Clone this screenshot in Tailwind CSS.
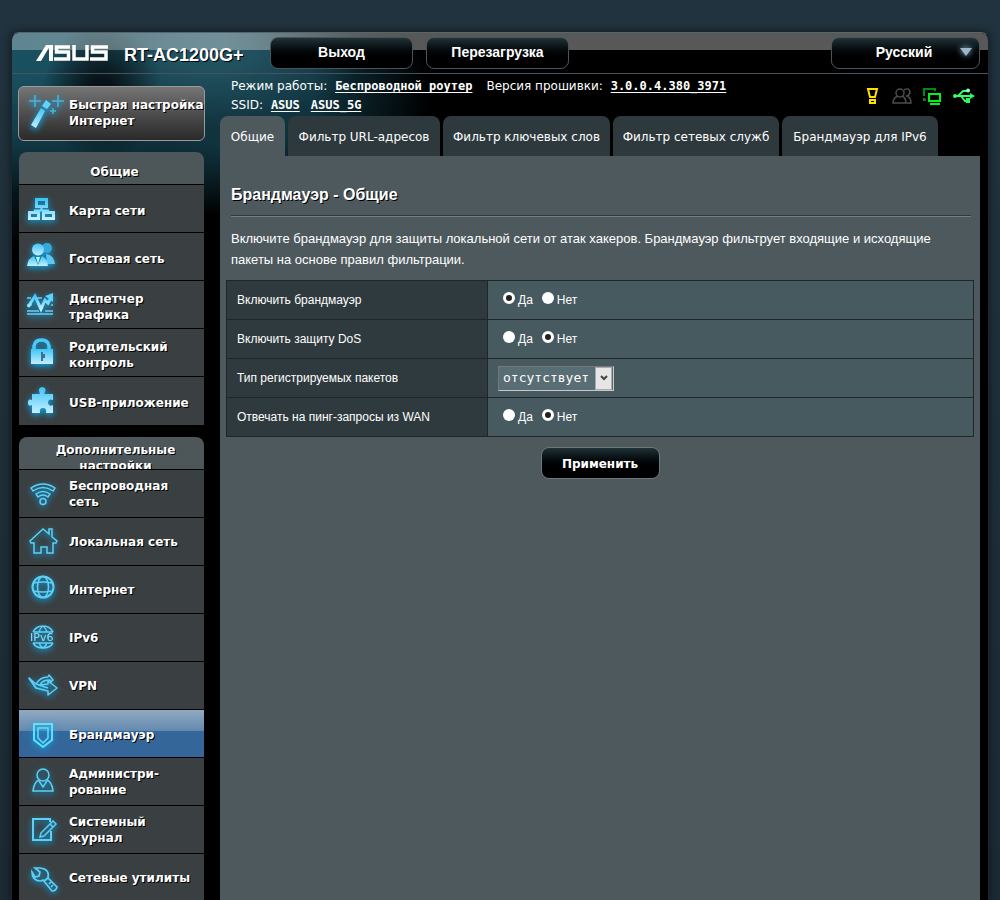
<!DOCTYPE html>
<html lang="ru">
<head>
<meta charset="utf-8">
<title>ASUS RT-AC1200G+ - Брандмауэр</title>
<script src="https://cdn.jsdelivr.net/npm/@tailwindcss/browser@4"></script>
</head>
<body class="min-h-screen bg-[#21333e] bg-linear-to-b from-[#21333e] to-[#1c2a34] px-[11px] pt-8 font-['DejaVu_Sans',sans-serif] text-white">
<svg class="absolute h-0 w-0" aria-hidden="true"><defs>
<linearGradient id="ice" x1="0" y1="0" x2="0" y2="1"><stop offset="0" stop-color="#3fc4f8"/><stop offset="1" stop-color="#c4efff"/></linearGradient>
</defs></svg>
<div class="relative min-h-[868px] overflow-hidden rounded-t-lg border-x border-t border-[#55666c] border-x-[#1c262b] bg-black shadow-[0_0_8px_#10181d]">
  <!-- backdrop glow -->
  <div class="absolute inset-x-0 top-0 h-60 bg-[radial-gradient(ellipse_60px_70px_at_90px_60px,#081318_20%,transparent_100%),radial-gradient(ellipse_150px_80px_at_200px_15px,#21505e_30%,transparent_100%),radial-gradient(ellipse_200px_150px_at_10px_10px,#195060_20%,transparent_100%),radial-gradient(ellipse_210px_130px_at_220px_60px,#10333e_40%,transparent_95%),radial-gradient(ellipse_240px_180px_at_40px_50px,#0c2a33_30%,transparent_95%)]"></div>
  <div class="absolute inset-x-0 top-0 h-[17px] bg-linear-to-r from-white/30 from-0% via-white/36 via-22% to-[#585858] to-50%"></div>

  <header class="relative flex h-[41px] items-center border-b border-[#46535d] pr-2">
    <svg class="ml-6 h-4 w-[72px]" viewBox="0 0 72 16" fill="none" stroke="#fff" stroke-width="3.500" role="img" aria-label="ASUS">
      <path d="M0 16 10 0h4.500L5 16zM12 0h5v16h-4V4z" fill="#fff" stroke="none"/>
      <path d="M34 2H20.500v5H32.500v7H18M38 0v14h13V0M72 2H56.500V7H70V14H54"/>
    </svg>
    <h1 class="ml-4 w-[146px] pt-[3px] text-lg/5 font-bold font-['Liberation_Sans',sans-serif] [text-shadow:1px_1px_0_#000]">RT-AC1200G+</h1>
    <button class="h-8 w-[143px] rounded-lg border border-[#48545a] bg-linear-to-b from-[#213238] to-black to-75% pb-0.5 text-sm font-bold font-['Liberation_Sans',sans-serif]">Выход</button>
    <button class="ml-[13px] h-8 w-[143px] rounded-lg border border-[#48545a] bg-linear-to-b from-[#213238] to-black to-75% pb-0.5 text-sm font-bold font-['Liberation_Sans',sans-serif]">Перезагрузка</button>
    <button class="ml-auto flex h-8 w-[149px] items-center rounded-lg border border-[#48545a] bg-linear-to-b from-[#213238] to-black to-75% pb-0.5 pr-[7px] text-sm font-bold font-['Liberation_Sans',sans-serif]"><span class="flex-1 pl-4">Русский</span>
      <svg class="h-2 w-3 drop-shadow-[0_0_3px_#9cf]" viewBox="0 0 12 8"><path d="M0 0h12L6 8z" fill="#9fb6c6"/></svg></button>
  </header>

  <div class="relative flex gap-[15px] pl-[6px] pr-2">
    <nav class="w-[187px] shrink-0 pt-3 text-[12px]/4 font-bold [text-shadow:1px_1px_0_#000]">
      <a href="#" class="flex h-[55px] items-center rounded-md border border-[#9a9a9a] bg-linear-to-b from-[#757575] to-[#2a2a2a] pb-0.5">
        <svg class="ml-[9px] mr-1 h-9 w-[37px] shrink-0 drop-shadow-[0_2px_3px_#08b4ff]" viewBox="0 0 37 36"><path d="M3 30 13 13l4 3L8 33z" fill="url(#ice)"/><path d="m14 11 4-6 5 4-4 5z" fill="#5fd4ff"/><path d="M7 0v12M1 6h12M30 0v12M24 6h12M25 13v6M22 16h6" stroke="#4ab4dc" stroke-width="1.500"/></svg>
        <span class="whitespace-nowrap">Быстрая настройка<br>Интернет</span></a>

      <section class="mx-px mt-[11px] divide-y divide-black">
        <h2 class="h-[33px] rounded-t-lg bg-[#4d5659] pl-[6px] pt-3 text-center">Общие</h2>
        <a href="#" class="flex h-12 items-center bg-[#3a3f41] pt-1"><svg class="mx-2 h-[34px] w-[34px] shrink-0 drop-shadow-[0_2px_3px_#08aaf0]" viewBox="0 0 34 34" fill="none" stroke="url(#ice)" stroke-width="3"><path d="M9.500 5.500h10v7h-10zM2.500 18.500h9v6h-9zM16.500 18.500h10v6h-10z"/><path d="M14.500 14v2M7 16.500h15" stroke="#7fdcff" stroke-width="2"/></svg><span class="flex-1">Карта сети</span></a>
        <a href="#" class="flex h-12 items-center bg-[#3a3f41] pt-1"><svg class="mx-2 h-[34px] w-[34px] shrink-0 drop-shadow-[0_2px_3px_#08aaf0]" viewBox="0 0 34 34"><circle cx="20" cy="6" r="5" fill="#36a8dc"/><path d="M19 12q8 1 9 10h-8z" fill="#5cc8f0"/><circle cx="11" cy="7.500" r="6" fill="url(#ice)"/><path d="M0 24q1-8 7-10l4 9 4-9q5 2 6 10z" fill="url(#ice)"/><path d="m9 15 2 7 2-7z" fill="#bff"/></svg><span class="flex-1">Гостевая сеть</span></a>
        <a href="#" class="flex h-12 items-center bg-[#3a3f41] pt-1"><svg class="mx-2 h-[34px] w-[34px] shrink-0 drop-shadow-[0_2px_3px_#08aaf0]" viewBox="0 0 34 34" fill="none" stroke="url(#ice)"><path d="M0 8h4M10 8h5M24 8h2M0 15h5M24 15h2M0 21h12M18 21h8M0 24h26" stroke="#6bcdf3" stroke-width="1.500"/><path d="m1 17 7-11 6 13 4-9 3 3 4-7" stroke-width="3"/><path d="m18 6 8-3v9z" fill="#5cd3ff" stroke="none"/></svg><span class="flex-1">Диспетчер<br>трафика</span></a>
        <a href="#" class="flex h-12 items-center bg-[#3a3f41] pt-1"><svg class="mx-2 h-[34px] w-[34px] shrink-0 drop-shadow-[0_2px_3px_#08aaf0]" viewBox="0 0 34 34"><path d="M7 12V8q1-6 7.500-6T22 8v4" fill="none" stroke="#4cc8fa" stroke-width="3.500"/><path d="M4 11h22v15H4z" fill="url(#ice)"/><path d="M14 14v9h2v-3h2v-4h-2v-2z" fill="#39748c"/></svg><span class="flex-1">Родительский<br>контроль</span></a>
        <a href="#" class="flex h-12 items-center bg-[#3a3f41] pt-1"><svg class="mx-2 h-[34px] w-[34px] shrink-0 drop-shadow-[0_2px_3px_#08aaf0]" viewBox="0 0 34 34"><path d="M5 8h8q-3-6 2-7 6 1 2 7h9v6q-5-2-5 3 1 4 5 2v8h-7q1-5-3-5t-3 5H5v-8q-4 2-4-2.500T5 14z" fill="url(#ice)"/></svg><span class="flex-1">USB-приложение</span></a>
      </section>

      <section class="mx-px mt-3 divide-y divide-black">
        <h2 class="h-[33px] overflow-hidden rounded-t-lg bg-[#4d5659] pl-6 pr-4 pt-[5px] text-center">Дополнительные настройки</h2>
        <a href="#" class="flex h-12 items-center bg-[#3a3f41]"><svg class="mx-2 h-[34px] w-[34px] shrink-0 drop-shadow-[0_2px_3px_#08aaf0]" viewBox="0 0 34 34" fill="none" stroke="#5fd0f5" stroke-width="1.500"><path d="M4 11q12-8 24 0l-2 3q-10-7-20 0zM9 17q7-5 14 0l-2 3q-5-4-10 0z"/><circle cx="16" cy="24.500" r="3"/></svg><span class="flex-1">Беспроводная<br>сеть</span></a>
        <a href="#" class="flex h-12 items-center bg-[#3a3f41]"><svg class="mx-2 h-[34px] w-[34px] shrink-0 drop-shadow-[0_2px_3px_#08aaf0]" viewBox="0 0 34 34" fill="none" stroke="#5fd0f5" stroke-width="1.500"><path d="m3 16 13-12 6 5V4h3v8l5 4-1 2h-3v10h-6v-6h-6v6H7V18H4z"/></svg><span class="flex-1">Локальная сеть</span></a>
        <a href="#" class="flex h-12 items-center bg-[#3a3f41]"><svg class="mx-2 h-[34px] w-[34px] shrink-0 drop-shadow-[0_2px_3px_#08aaf0]" viewBox="0 0 34 34" fill="none" stroke="#5fd0f5" stroke-width="1.500"><circle cx="16" cy="14" r="10.500" stroke-width="2"/><ellipse cx="16" cy="14" rx="5.500" ry="10.500"/><path d="M7 10q9-2 18 0M7 18q9 2 18 0"/></svg><span class="flex-1">Интернет</span></a>
        <a href="#" class="flex h-12 items-center bg-[#3a3f41]"><svg class="mx-2 h-[34px] w-[34px] shrink-0 drop-shadow-[0_2px_3px_#08aaf0]" viewBox="0 0 34 34" fill="none" stroke="#5fd0f5" stroke-width="1.500"><path d="M6 11q3-6 10-6t10 6M6 22q3 5 10 5t10-5M12 11q1-4 4-6 3 2 4 6M12 22q1 3 4 5 3-2 4-5M6 11h20M6 22h20"/><text x="3" y="20" fill="#8fe0ff" stroke="none" font-family="DejaVu Sans" font-size="11" font-weight="400" style="text-shadow:none">IPv6</text></svg><span class="flex-1">IPv6</span></a>
        <a href="#" class="flex h-12 items-center bg-[#3a3f41]"><svg class="mx-2 h-[34px] w-[34px] shrink-0 drop-shadow-[0_2px_3px_#08aaf0]" viewBox="0 0 34 34" fill="none" stroke="#5fd0f5" stroke-width="1.500" stroke-linejoin="round"><path d="m2 9 7 6q4-7 12-7l1-2 4 5-2 2-1-2q-8 0-10 5l8-1v-3l9 7-9 7v-4L9 19z"/><path d="m2 9 7 10M9 15l12 4"/></svg><span class="flex-1">VPN</span></a>
        <a href="#" aria-current="page" class="flex h-12 items-center bg-linear-to-b from-[#91aac2] from-0% via-[#6289ae] via-45% to-[#35669a] to-45% pt-0.5"><svg class="mx-2 h-[34px] w-[34px] shrink-0 drop-shadow-[0_2px_3px_#08aaf0]" viewBox="0 0 34 34" fill="none" stroke="#5fe0ff" stroke-width="1.500"><path d="M7 6h18v16l-9 7-9-7z" stroke-width="2"/><path d="M11 10h10v10l-5 5-5-5z"/></svg><span class="flex-1">Брандмауэр</span></a>
        <a href="#" class="flex h-12 items-center bg-[#3a3f41]"><svg class="mx-2 h-[34px] w-[34px] shrink-0 drop-shadow-[0_2px_3px_#08aaf0]" viewBox="0 0 34 34" fill="none" stroke="#5fd0f5" stroke-width="1.500"><circle cx="16" cy="10" r="6"/><path d="M12 15q-5 2-6 11h20q-1-9-6-11M12 16l4 6 4-6"/></svg><span class="flex-1">Администри-<br>рование</span></a>
        <a href="#" class="flex h-12 items-center bg-[#3a3f41]"><svg class="mx-2 h-[34px] w-[34px] shrink-0 drop-shadow-[0_2px_3px_#08aaf0]" viewBox="0 0 34 34" fill="none" stroke="#5fd0f5" stroke-width="1.500"><path d="M23 9V6H6v21h18v-9" stroke-width="2"/><path d="m14 20 12-12 3 3-12 12-4 1zM23 11l3 3"/></svg><span class="flex-1">Системный<br>журнал</span></a>
        <a href="#" class="flex h-12 items-center bg-[#3a3f41]"><svg class="mx-2 h-[34px] w-[34px] shrink-0 drop-shadow-[0_2px_3px_#08aaf0]" viewBox="0 0 34 34" fill="none" stroke="#5fd0f5" stroke-width="1.700"><path d="M5 11q0 9 9 9l2-1 9 11q4 0 5-4l-9-9q2-9-8-10H8l5 4-1 4-4 1z"/><path d="m17 20 4-3M22 23l2-2M24 26l2-2"/></svg><span class="flex-1">Сетевые утилиты</span></a>
      </section>
    </nav>

    <div class="flex min-w-0 flex-1 flex-col">
      <div class="flex h-[42px] pl-[11px] pt-[3px]">
        <div class="flex-1 text-[12px]/[19px]">
          <p>Режим работы: <a href="#" class="ml-1 font-bold underline underline-offset-2 font-['DejaVu_Sans_Mono',monospace]">Беспроводной роутер</a><span class="ml-[14px]">Версия прошивки:</span> <a href="#" class="ml-1 font-bold underline underline-offset-2 font-['DejaVu_Sans_Mono',monospace]">3.0.0.4.380_3971</a></p>
          <p>SSID: <a href="#" class="ml-1 font-bold underline underline-offset-2 font-['DejaVu_Sans_Mono',monospace]">ASUS</a><a href="#" class="ml-[11px] font-bold underline underline-offset-2 font-['DejaVu_Sans_Mono',monospace]">ASUS_5G</a></p>
        </div>
        <div class="mr-1 mt-[9px] flex h-5 items-center gap-[10px]">
          <svg class="h-5 w-5" viewBox="0 0 20 20" fill="none" stroke="#ffe000" stroke-width="2"><path d="M6 3h9l-2 8H8zM8 14h5v3H8z"/></svg>
          <svg class="h-5 w-5" viewBox="0 0 20 20" fill="none" stroke="#4d4d4d" stroke-width="1.500"><circle cx="8" cy="7" r="4"/><path d="M12 4q5-3 6 2 0 3-3 4 4 2 4 7h-5M6 10q-5 2-5 7h13q0-5-4-7"/></svg>
          <svg class="h-5 w-5" viewBox="0 0 20 20" fill="none" stroke="#00f020" stroke-width="2"><path d="M2 10V3h11v2M2 12v2h2" stroke="#008a10"/><path d="M7 8h11v7H7zM8 18h10"/></svg>
          <svg class="h-5 w-6" viewBox="0 0 24 20" fill="none" stroke="#3f6" stroke-width="1.800"><path d="M2 10h18M6 10l5-5h4M9 10l4 5h3"/><circle cx="3" cy="10" r="2" fill="#3f6" stroke="none"/><circle cx="16" cy="4.500" r="2" fill="#8fc" stroke="none"/><path d="m18 7 5 3-5 3zM14 12h4v5h-4z" fill="#2f5" stroke="none"/></svg>
        </div>
      </div>
      <div class="flex h-[40px] gap-[3px] text-[12px] [&>a]:flex [&>a]:items-center [&>a]:justify-center [&>a]:rounded-t-lg [&>a]:whitespace-nowrap [&>a]:pt-px">
        <a href="#" aria-current="page" class="w-[65px] bg-[#4d595d]">Общие</a>
        <a href="#" class="w-[152px] bg-[#2e393e]">Фильтр URL-адресов</a>
        <a href="#" class="w-[167px] bg-[#2e393e]">Фильтр ключевых слов</a>
        <a href="#" class="w-[166px] bg-[#2e393e]">Фильтр сетевых служб</a>
        <a href="#" class="w-[156px] bg-[#2e393e]">Брандмауэр для IPv6</a>
      </div>
      <main class="flex-1 bg-[#4d595d] px-[6px] pt-[29px] font-['Liberation_Sans',sans-serif] text-xs">
        <h2 class="ml-[5px] mr-[3px] h-[31px] border-b border-[#2e3a3e] text-base/5 font-bold shadow-[0_1px_0_#6d7f87] [text-shadow:1px_1px_0_#000]">Брандмауэр - Общие</h2>
        <p class="mb-[10px] ml-[5px] mr-[3px] mt-3 text-[13px]/[21px]">Включите брандмауэр для защиты локальной сети от атак хакеров. Брандмауэр фильтрует входящие и исходящие пакеты на основе правил фильтрации.</p>
        <form>
          <table class="w-full border-collapse [&_td]:h-[39px] [&_td]:border [&_td]:border-[#202528] [&_td]:bg-[#475a5f] [&_td]:pl-[15px] [&_th]:w-[261px] [&_th]:border [&_th]:border-[#202528] [&_th]:bg-[#2f3a3e] [&_th]:pl-[10px] [&_th]:text-left [&_th]:font-normal [&_input]:mr-[3px] [&_input]:h-3 [&_input]:w-3 [&_input]:appearance-none [&_input]:rounded-full [&_input]:bg-white [&_input:checked]:border-[3px] [&_input:checked]:border-white [&_input:checked]:bg-[#222] [&_label]:mr-[9px]">
            <tr><th scope="row">Включить брандмауэр</th><td><label><input type="radio" name="fw" checked>Да</label><label><input type="radio" name="fw">Нет</label></td></tr>
            <tr><th scope="row">Включить защиту DoS</th><td><label><input type="radio" name="dos">Да</label><label><input type="radio" name="dos" checked>Нет</label></td></tr>
            <tr><th scope="row"><label for="log">Тип регистрируемых пакетов</label></th><td><div class="relative -ml-[5px] w-[116px]"><select id="log" class="block h-[25px] w-full appearance-none border border-[#c8c8c8] border-l-[#777] border-t-[#777] bg-[#596e74] pl-1 text-[13px] font-['DejaVu_Sans_Mono',monospace]"><option>отсутствует</option></select>
              <span class="pointer-events-none absolute bottom-px right-0.5 top-px flex w-[17px] items-center justify-center border border-[#aaa] bg-[#e6e6e6]"><svg class="h-[6px] w-[8px]" viewBox="0 0 8 6" fill="none" stroke="#444" stroke-width="2"><path d="m1 1 3 3 3-3"/></svg></span></div></td></tr>
            <tr><th scope="row">Отвечать на пинг-запросы из WAN</th><td><label><input type="radio" name="ping">Да</label><label><input type="radio" name="ping" checked>Нет</label></td></tr>
          </table>
          <button type="button" class="mx-auto mt-[10px] block h-8 w-[119px] rounded-lg border border-[#6b777b] bg-linear-to-b from-[#213238] to-black to-75% pt-0.5 text-[12px] font-bold font-['DejaVu_Sans',sans-serif]">Применить</button>
        </form>
      </main>
    </div>
  </div>
</div>
</body>
</html>
